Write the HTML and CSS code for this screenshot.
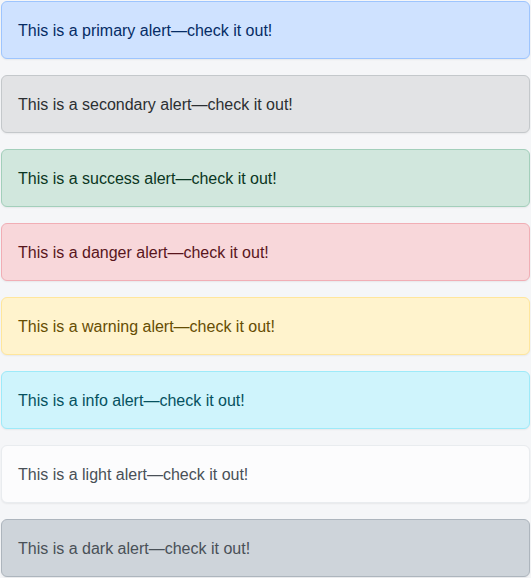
FILE: index.html
```html
<!DOCTYPE html>
<html>
<head>
<meta charset="utf-8">
<link rel="stylesheet" href="styles.css">
</head>
<body>
<div class="stack">
  <div class="alert primary">This is a primary alert—check it out!</div>
  <div class="alert secondary">This is a secondary alert—check it out!</div>
  <div class="alert success">This is a success alert—check it out!</div>
  <div class="alert danger">This is a danger alert—check it out!</div>
  <div class="alert warning">This is a warning alert—check it out!</div>
  <div class="alert info">This is a info alert—check it out!</div>
  <div class="alert light">This is a light alert—check it out!</div>
  <div class="alert dark">This is a dark alert—check it out!</div>
</div>
</body>
</html>
```
FILE: styles.css
```css
html, body { margin: 0; padding: 0; }
body {
  background: #f5f6f8;
  font-family: "Liberation Sans", Arial, sans-serif;
  font-size: 16px;
  line-height: 24px;
}
.stack {
  padding: 1px;
  display: flex;
  flex-direction: column;
  gap: 16px;
}
.alert {
  padding: 17px 16px 15px;
  border: 1px solid transparent;
  border-radius: 6px;
  box-shadow: 0 1px 2px rgba(0,0,0,0.06);
}
.primary { background: #cfe2ff; border-color: #9ec5fe; color: #052c65; }
.secondary { background: #e2e3e5; border-color: #c4c8cb; color: #2b2f32; }
.success { background: #d1e7dd; border-color: #a3cfbb; color: #0a3622; }
.danger { background: #f8d7da; border-color: #f1aeb5; color: #58151c; }
.warning { background: #fff3cd; border-color: #ffe69c; color: #664d03; }
.info { background: #cff4fc; border-color: #9eeaf9; color: #055160; }
.light { background: #fcfcfd; border-color: #e9ecef; color: #495057; }
.dark { background: #ced4da; border-color: #adb5bd; color: #495057; }
```
